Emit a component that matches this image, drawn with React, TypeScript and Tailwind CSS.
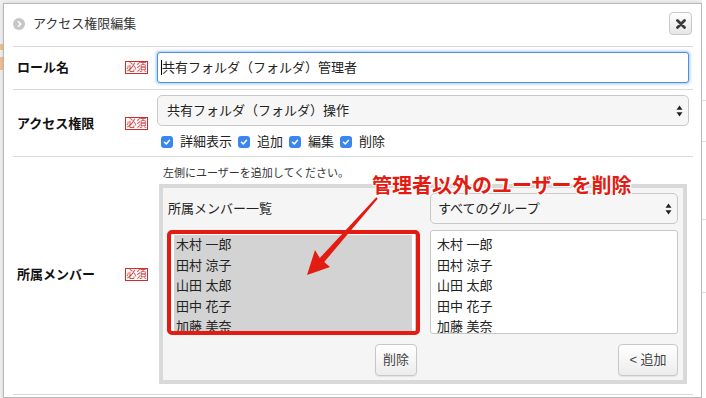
import React from "react";

const members = ["木村 一郎", "田村 涼子", "山田 太郎", "田中 花子", "加藤 美奈"];
const perms = ["詳細表示", "追加", "編集", "削除"];

const Required = () => (
  <span className="flex w-[23px] h-[13px] items-center justify-center border border-[#cf2b2b] bg-white text-[10px] leading-none text-[#cf2b2b]">
    必須
  </span>
);

const Check = () => (
  <span className="flex w-[12px] h-[12px] items-center justify-center rounded-[3px] bg-[#3b86ee]">
    <svg width="8" height="8" viewBox="0 0 8 8">
      <path
        d="M1.5 4.2 L3.3 5.9 L6.5 2.3"
        stroke="white"
        strokeWidth="1.5"
        fill="none"
        strokeLinecap="round"
        strokeLinejoin="round"
      />
    </svg>
  </span>
);

const Arrows = () => (
  <svg width="7" height="12" viewBox="0 0 7 12">
    <path d="M3.5 0.5 L6.5 4.8 H0.5Z M3.5 11.5 L6.5 7.2 H0.5Z" fill="#222" />
  </svg>
);

const Row = ({
  label,
  className,
  children,
}: {
  label: string;
  className: string;
  children: React.ReactNode;
}) => (
  <div className={`flex items-center border-b border-[#dadada] px-[4px] ${className}`}>
    <div className="w-[108px] text-[13px] font-bold text-[#111]">{label}</div>
    <Required />
    <div className="ml-[9px] flex-1">{children}</div>
  </div>
);

const Button = ({ label, className }: { label: string; className: string }) => (
  <button
    className={`h-[32px] rounded-[4px] border border-[#c8c8c8] bg-gradient-to-b from-white to-[#ececec] text-[13px] text-[#444] shadow-[0_1px_1px_rgba(0,0,0,0.08)] ${className}`}
  >
    {label}
  </button>
);

export default function App() {
  return (
    <div className="relative flex w-[706px] h-[398px] overflow-hidden bg-[#f1f1f1] font-['Liberation_Sans','Noto_Sans_CJK_JP',sans-serif] text-[#222]">
      {/* page behind the dialog */}
      <div className="flex w-[3px] flex-col pt-[44px]">
        <div className="h-[6px] bg-[#f3c08c]" />
        <div className="mt-[7px] h-[13px] bg-[#f3c08c]" />
      </div>

      <div className="mt-[3px] flex w-[699px] flex-col border border-[#b9b9b9] bg-white pl-[9px] pr-[8px] shadow-[0_0_4px_rgba(0,0,0,0.15)]">
        {/* header */}
        <div className="flex h-[43px] shrink-0 items-center border-b border-[#dadada] pb-[3px]">
          <svg width="12" height="12" viewBox="0 0 12 12">
            <circle cx="6" cy="6" r="6" fill="#c6c6c6" />
            <path d="M5 3.3 L7.6 6 L5 8.7" stroke="white" strokeWidth="1.6" fill="none" />
          </svg>
          <span className="ml-[8px] text-[13px] text-[#333]">アクセス権限編集</span>
          <button className="ml-auto mr-[1px] flex w-[23px] h-[23px] items-center justify-center rounded-[4px] border border-[#c8c8c8] bg-gradient-to-b from-white to-[#e6e6e6]">
            <svg width="10" height="10" viewBox="0 0 10 10">
              <path d="M1.5 1.5 L8.5 8.5 M8.5 1.5 L1.5 8.5" stroke="#3a3a3a" strokeWidth="2.8" strokeLinecap="round" />
            </svg>
          </button>
        </div>

        {/* role name */}
        <Row label="ロール名" className="h-[43px] shrink-0 pt-[5px] pb-[6px]">
          <div className="flex h-[31px] items-center rounded-[3px] border border-[#4d90e0] bg-white pl-[3px] text-[13px] shadow-[0_0_3px_1px_rgba(77,144,224,0.5)]">
            <span className="h-[15px] w-px bg-black" />
            <span>共有フォルダ（フォルダ）管理者</span>
          </div>
        </Row>

        {/* access */}
        <Row label="アクセス権限" className="h-[67px] shrink-0 pt-[5px] pb-[4px]">
          <div className="flex h-[31px] items-center rounded-[5px] border border-[#c8c8c8] bg-[#f6f6f6] pl-[9px] pr-[5px] text-[13px]">
            <span className="flex-1">共有フォルダ（フォルダ）操作</span>
            <Arrows />
          </div>
          <div className="mt-[6px] flex h-[20px] items-center gap-[6px] pl-[4px] text-[13px]">
            {perms.map((p) => (
              <div key={p} className="flex items-center gap-[7px]">
                <Check />
                <span>{p}</span>
              </div>
            ))}
          </div>
        </Row>

        {/* members */}
        <Row label="所属メンバー" className="h-[238px] shrink-0 pt-[8px] pb-[10px]">
          <div className="h-[16px] pl-[6px] text-[11px] leading-[16px] text-[#333]">
            左側にユーザーを追加してください。
          </div>
          <div className="mx-[2px] mt-[3px] h-[200px] border-4 border-[#d9d9d9] bg-[#f5f5f5] px-[5px] pt-[5px]">
            <div className="grid grid-cols-[252px_248px] gap-x-[10px]">
              <div className="flex flex-col">
                <div className="flex h-[31px] items-center text-[13px]">所属メンバー一覧</div>
                <div className="relative ml-[2px] mt-[7px] h-[103px] w-[246px] border border-[#cccccc] bg-white px-[3px] pt-[3px] pb-[1px]">
                  <div className="h-full overflow-hidden bg-[#d3d3d3] text-[13px] text-[#222]">
                    {members.map((m) => (
                      <div key={m} className="h-[20.5px] pl-[2px] leading-[20.5px]">
                        {m}
                      </div>
                    ))}
                  </div>
                  <div className="absolute -top-[2px] -bottom-[2px] -left-[4px] -right-[5px] rounded-[5px] border-4 border-[#e31b10]" />
                </div>
                <div className="mt-[10px] flex justify-end pr-[3px]">
                  <Button label="削除" className="w-[42px]" />
                </div>
              </div>

              <div className="flex flex-col">
                <div className="flex h-[31px] items-center rounded-[5px] border border-[#c8c8c8] bg-[#f6f6f6] pl-[7px] pr-[5px] text-[13px]">
                  <span className="flex-1">すべてのグループ</span>
                  <Arrows />
                </div>
                <div className="mt-[6px] h-[104px] overflow-hidden rounded-[3px] border border-[#c8c8c8] bg-white pl-[6px] pt-[4px] text-[13px]">
                  {members.map((m) => (
                    <div key={m} className="h-[20.5px] leading-[20.5px]">
                      {m}
                    </div>
                  ))}
                </div>
                <div className="mt-[10px] flex justify-end">
                  <Button label="< 追加" className="w-[60px]" />
                </div>
              </div>
            </div>
          </div>
        </Row>
      </div>

      <div className="flex flex-1 flex-col bg-white">
        <div className="mt-[100px] h-px bg-[#dddddd]" />
        <div className="mt-[40px] h-px bg-[#dddddd]" />
        <div className="mt-[77px] h-px bg-[#dddddd]" />
        <div className="mt-[72px] h-px bg-[#dddddd]" />
      </div>

      {/* annotation */}
      <div className="absolute left-[372px] top-[176px] text-[20px] font-bold leading-[20px] text-[#e31b10] [text-shadow:0_0_2px_#fff,1px_1px_0_#fff,-1px_-1px_0_#fff,1px_-1px_0_#fff,-1px_1px_0_#fff]">
        管理者以外のユーザーを削除
      </div>
      <svg className="pointer-events-none absolute left-0 top-0" width="706" height="398">
        <polygon
          points="376.3,197.3 377.7,198.7 324.2,262 330,267 307,275 315,250 319.8,258"
          fill="#e31b10"
        />
      </svg>
    </div>
  );
}
